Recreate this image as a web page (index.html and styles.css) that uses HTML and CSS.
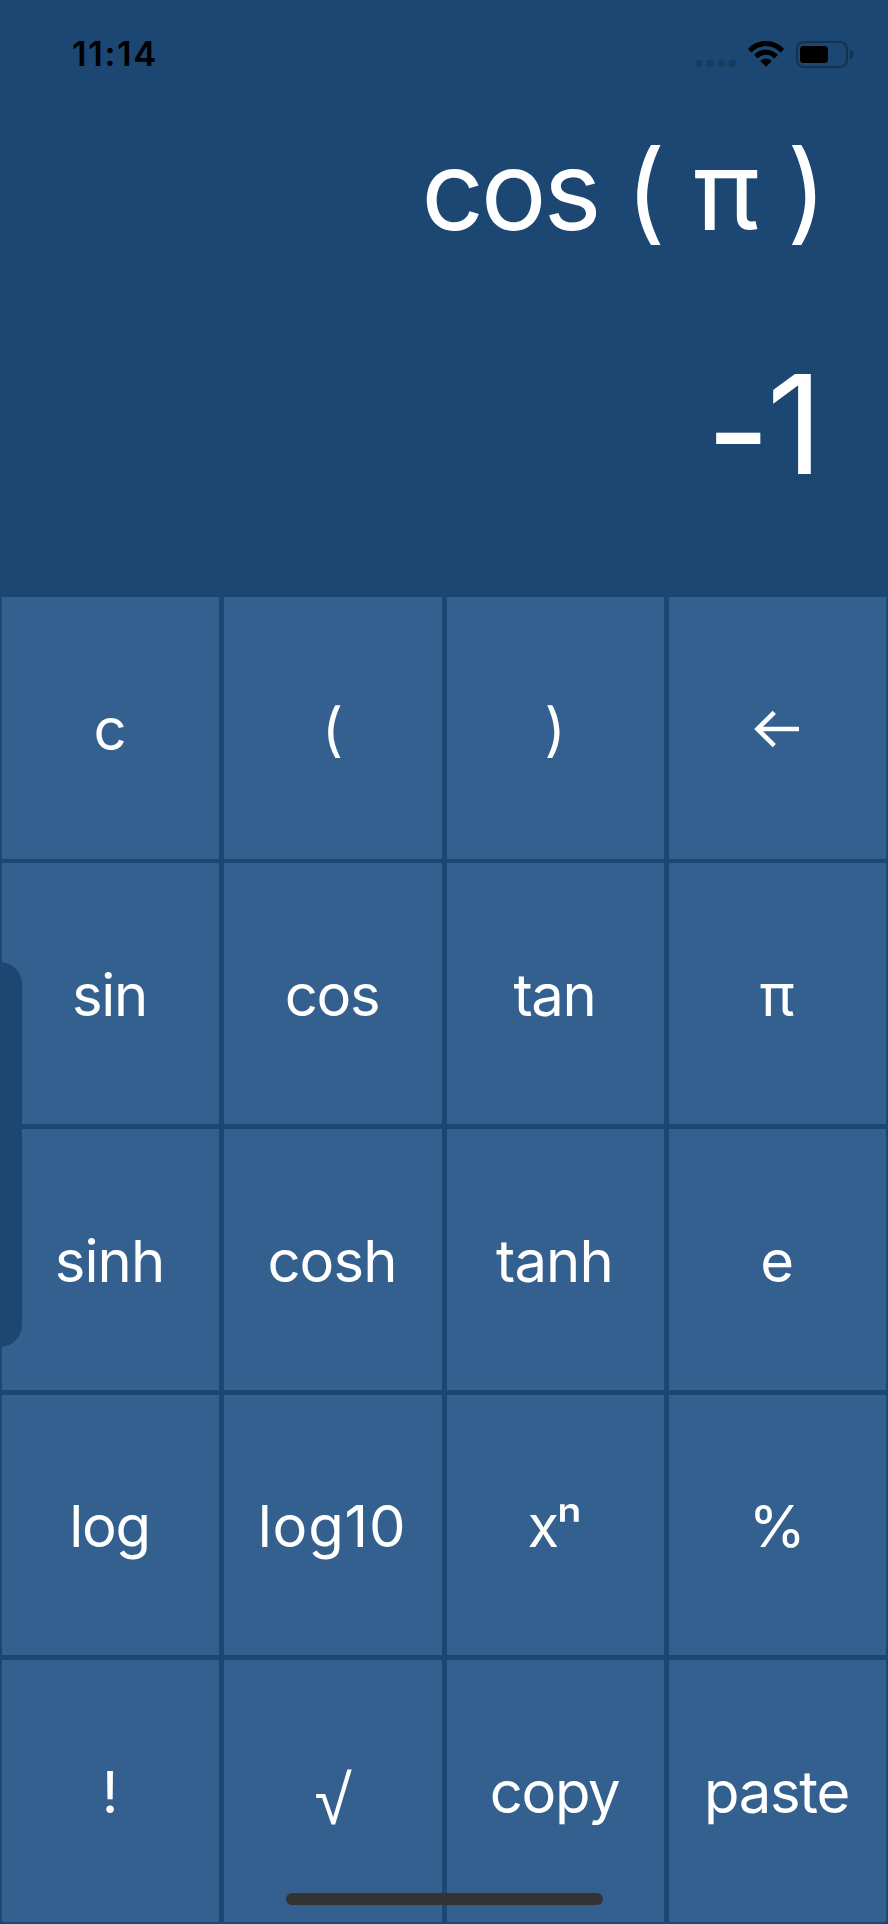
FILE: index.html
```html
<!DOCTYPE html>
<html lang="en">
<head>
<meta charset="utf-8">
<title>Calculator</title>
<link rel="stylesheet" href="styles.css">
</head>
<body>
<div class="phone">
  <header class="status">
    <span class="time">11:14</span>
    <div class="indicators">
      <svg class="cell" width="42" height="8" viewBox="0 0 42 8"><rect x="0.3" width="7" height="7.2" rx="2.4"/><rect x="11.5" width="7" height="7.2" rx="2.4"/><rect x="22.7" width="7" height="7.2" rx="2.4"/><rect x="33.9" width="7" height="7.2" rx="2.4"/></svg>
      <svg class="wifi" width="36" height="26" viewBox="0 0 36 26"><path d="M18 0C24.8 0 31.2 2.700 35.600 7.400Q36.100 8 35.600 8.600L33.200 11Q32.600 11.500 32 11C28.200 7.200 23.300 5.100 18 5.100S7.800 7.200 4 11Q3.400 11.500 2.800 11L.4 8.600Q-.1 8 .4 7.400C4.800 2.700 11.200 0 18 0Z"/><path d="M18 8.700C22.400 8.700 26.400 10.400 29.400 13.400Q29.900 14 29.400 14.600L26.900 17Q26.300 17.500 25.700 17C23.600 15 20.900 13.800 18 13.800S12.400 15 10.300 17Q9.700 17.500 9.100 17L6.600 14.600Q6.100 14 6.600 13.400C9.600 10.400 13.600 8.700 18 8.700Z"/><path d="M18 17.500C20 17.500 21.800 18.200 23.200 19.400Q23.800 20 23.200 20.600L18.600 25.200Q18 25.800 17.400 25.200L12.800 20.600Q12.200 20 12.800 19.400C14.200 18.200 16 17.500 18 17.500Z"/></svg>
      <svg class="battery" width="58" height="27" viewBox="0 0 58 27"><rect class="shell" x="1" y="1" width="50" height="25" rx="7"/><rect x="4" y="5" width="28" height="17" rx="3.500"/><path class="cap" d="M54 8.500Q57.200 10 57.200 13.500T54 18.500Z"/></svg>
    </div>
  </header>
  <section class="display">
    <div class="expression"><span class="fn">cos</span> ( π )</div>
    <div class="result"><span class="minus">-</span>1</div>
  </section>
  <main class="keypad">
    <button class="key">c</button>
    <button class="key">(</button>
    <button class="key">)</button>
    <button class="key" aria-label="Delete"><svg class="arrow" width="46" height="38" viewBox="0 0 46 38"><path d="M45 19H4M20.300 2.300L3.500 19L20.300 35.700"/></svg></button>
    <button class="key">sin</button>
    <button class="key">cos</button>
    <button class="key">tan</button>
    <button class="key">π</button>
    <button class="key hyperbolic">sinh</button>
    <button class="key hyperbolic">cosh</button>
    <button class="key hyperbolic">tanh</button>
    <button class="key">e</button>
    <button class="key">log</button>
    <button class="key log10">log10</button>
    <button class="key power">xⁿ</button>
    <button class="key">%</button>
    <button class="key">!</button>
    <button class="key"><span class="root">√</span></button>
    <button class="key">copy</button>
    <button class="key">paste</button>
  </main>
  <div class="drawer"></div>
  <div class="home-bar"></div>
</div>
</body>
</html>
```
FILE: styles.css
```css
* { box-sizing: border-box; }
body {
  margin: 0;
  background: #1c4773;
  font-family: Inter, "Liberation Sans", sans-serif;
}
.phone {
  position: relative;
  width: 888px;
  height: 1924px;
  overflow: hidden;
  background: #1c4773;
  display: flex;
  flex-direction: column;
}
.status {
  height: 108px;
  padding: 0 34px 0 72px;
  display: flex;
  justify-content: space-between;
  align-items: center;
  color: #000;
}
.time {
  font-size: 34.500px;
  font-weight: 600;
  line-height: 40px;
  letter-spacing: 1.600px;
}
.indicators {
  display: flex;
  align-items: flex-end;
  height: 27px;
}
.cell { fill: #183b60; margin: 0 11px 0 0; }
.wifi { margin: 0 12px 1px 0; }
.shell { fill: none; stroke: #153350; stroke-width: 2; }
.cap { fill: #153350; }
.display {
  height: 489px;
  padding-right: 61px;
  color: #fff;
  text-align: right;
}
.expression {
  padding-top: 2px;
  font-size: 110px;
  line-height: 160px;
  word-spacing: -3.600px;
}
.fn { letter-spacing: -3.300px; }
.result {
  margin-top: 64px;
  padding-right: 4px;
  font-size: 138px;
  line-height: 180px;
}
.minus {
  letter-spacing: -3px;
  line-height: 0;
  vertical-align: -7px;
}
.keypad {
  display: grid;
  grid-template-columns: 217px 218px 217px 217px;
  grid-template-rows: 261px 261px 261px 260px 262px;
  gap: 5px;
  padding-left: 2px;
}
.key {
  display: flex;
  align-items: center;
  justify-content: center;
  border: 0;
  padding: 2px 2px 0 0;
  background: #34608f;
  color: #fff;
  font: 400 58px Inter, "Liberation Sans", sans-serif;
  letter-spacing: -1.300px;
}
.key:nth-child(-n+4) { margin-bottom: -1px; }
.key.hyperbolic { letter-spacing: -0.900px; }
.key.log10 { letter-spacing: 0.800px; }
.key.power { letter-spacing: -2.500px; padding-right: 4px; }
.root {
  font-family: "Liberation Sans", sans-serif;
  transform: translateY(7px) scale(1.170, 1.190);
}
.arrow {
  fill: none;
  stroke: #fff;
  stroke-width: 4.600;
}
.drawer {
  position: absolute;
  left: -22px;
  top: 962px;
  width: 44px;
  height: 385px;
  border-radius: 22px;
  background: #1c4773;
}
.home-bar {
  position: absolute;
  left: 286px;
  top: 1893px;
  width: 317px;
  height: 12px;
  border-radius: 6px;
  background: #333;
}
```
